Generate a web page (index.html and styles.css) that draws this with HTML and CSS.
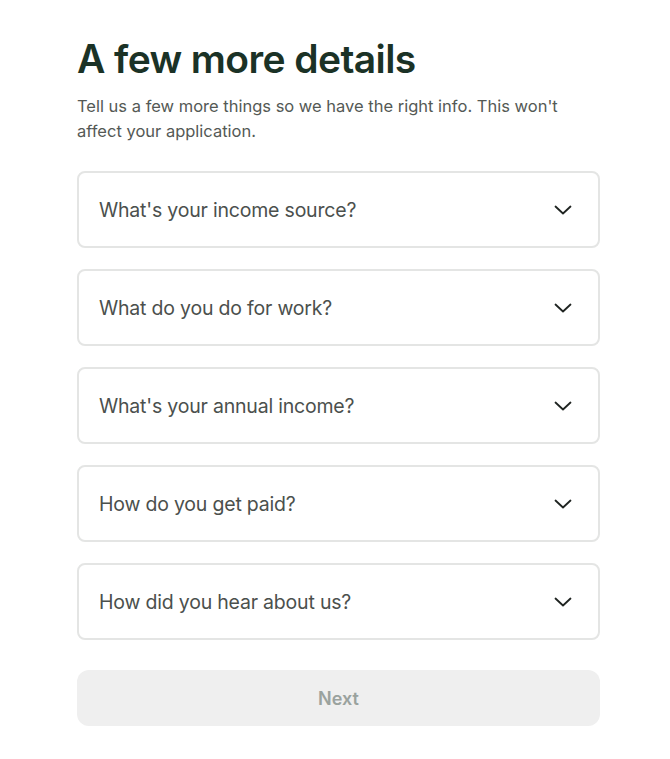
FILE: index.html
```html
<!DOCTYPE html>
<html lang="en">
<head>
	<meta charset="UTF-8">
	<title>A few more details</title>
	<link rel="stylesheet" href="styles.css">
</head>
<body>
	<div class="page">
		<h1 class="title">A few more details</h1>
		<p class="intro">Tell us a few more things so we have the right info. This won't affect your application.</p>

		<div class="fields">
			<div class="field">
				<span>What's your income source?</span>
				<svg class="chev" width="18" height="10" viewBox="0 0 18 10"><path d="M1.5 1.5 L9 8.5 L16.5 1.5" fill="none" stroke="#1f2421" stroke-width="1.8" stroke-linecap="round" stroke-linejoin="round"/></svg>
			</div>
			<div class="field">
				<span>What do you do for work?</span>
				<svg class="chev" width="18" height="10" viewBox="0 0 18 10"><path d="M1.5 1.5 L9 8.5 L16.5 1.5" fill="none" stroke="#1f2421" stroke-width="1.8" stroke-linecap="round" stroke-linejoin="round"/></svg>
			</div>
			<div class="field">
				<span>What's your annual income?</span>
				<svg class="chev" width="18" height="10" viewBox="0 0 18 10"><path d="M1.5 1.5 L9 8.5 L16.5 1.5" fill="none" stroke="#1f2421" stroke-width="1.8" stroke-linecap="round" stroke-linejoin="round"/></svg>
			</div>
			<div class="field">
				<span>How do you get paid?</span>
				<svg class="chev" width="18" height="10" viewBox="0 0 18 10"><path d="M1.5 1.5 L9 8.5 L16.5 1.5" fill="none" stroke="#1f2421" stroke-width="1.8" stroke-linecap="round" stroke-linejoin="round"/></svg>
			</div>
			<div class="field">
				<span>How did you hear about us?</span>
				<svg class="chev" width="18" height="10" viewBox="0 0 18 10"><path d="M1.5 1.5 L9 8.5 L16.5 1.5" fill="none" stroke="#1f2421" stroke-width="1.8" stroke-linecap="round" stroke-linejoin="round"/></svg>
			</div>
		</div>

		<button class="next" disabled>Next</button>
	</div>
</body>
</html>
```

FILE: styles.css
```css
*{
	margin: 0;
	padding: 0;
	box-sizing: border-box;
}
body{
	background: #fff;
	font-family: Inter, "Liberation Sans", sans-serif;
}
.page{
	width: 523px;
	margin-left: 77px;
	padding-top: 36px;
}
.title{
	font-size: 39px;
	font-weight: 600;
	color: #1b3226;
	letter-spacing: -0.6px;
	line-height: 46px;
}
.intro{
	margin-top: 12px;
	font-size: 16.5px;
	line-height: 25px;
	color: #545955;
	letter-spacing: 0;
	padding-right: 30px;
}
.fields{
	margin-top: 27px;
	display: flex;
	flex-direction: column;
	gap: 21px;
}
.field{
	height: 77px;
	border: 2px solid #e4e5e4;
	border-radius: 8px;
	display: flex;
	align-items: center;
	justify-content: space-between;
	padding: 0 26px 0 20px;
	font-size: 19.5px;
	color: #4b504d;
	letter-spacing: -0.2px;
}
.chev{
	display: block;
}
.next{
	margin-top: 30px;
	width: 100%;
	height: 56px;
	border: none;
	border-radius: 12px;
	background: #efefef;
	color: #9aa29e;
	font-family: Inter, "Liberation Sans", sans-serif;
	font-size: 18px;
	font-weight: 600;
}
```
